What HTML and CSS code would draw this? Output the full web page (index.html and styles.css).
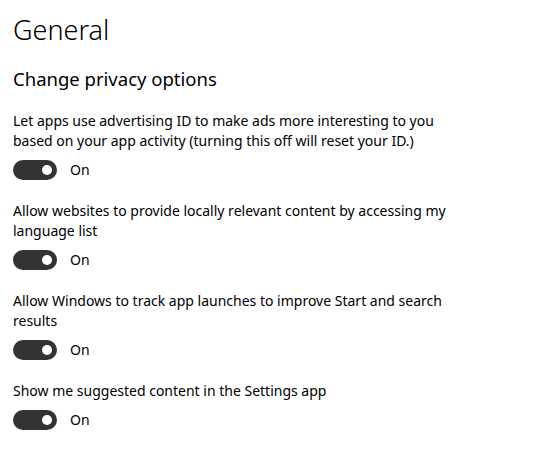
FILE: index.html
```html
<!DOCTYPE html>
<html lang="en">
<head>
    <meta charset="UTF-8">
    <meta name="viewport" content="width=device-width, initial-scale=1.0">
    <title>Privacy - General</title>
    <link rel="stylesheet" href="styles.css">
</head>
<body>
    <div class="page">
        <h1>General</h1>
        <h2>Change privacy options</h2>

        <div class="option">
            <p>Let apps use advertising ID to make ads more interesting to you based on your app activity (turning this off will reset your ID.)</p>
            <label class="switch"><span class="track"><span class="knob"></span></span>On</label>
        </div>

        <div class="option">
            <p>Allow websites to provide locally relevant content by accessing my language list</p>
            <label class="switch"><span class="track"><span class="knob"></span></span>On</label>
        </div>

        <div class="option">
            <p>Allow Windows to track app launches to improve Start and search results</p>
            <label class="switch"><span class="track"><span class="knob"></span></span>On</label>
        </div>

        <div class="option">
            <p>Show me suggested content in the Settings app</p>
            <label class="switch"><span class="track"><span class="knob"></span></span>On</label>
        </div>
    </div>
</body>
</html>
```

FILE: styles.css
```css
body {
    margin: 0;
    background: #fff;
    color: #000;
    font-family: 'Noto Sans', 'Open Sans', sans-serif;
}
.page {
    padding: 12px 13px;
    width: 440px;
}
h1 {
    margin: 0;
    font-size: 27px;
    font-weight: 300;
    line-height: 36px;
}
h2 {
    margin: 18px 0 0;
    font-size: 18.5px;
    font-weight: 400;
    line-height: 26px;
}
.option {
    margin-top: 19px;
}
.option + .option {
    margin-top: 21px;
}
.option p {
    margin: 0;
    font-size: 14px;
    line-height: 20px;
}
.switch {
    display: flex;
    align-items: center;
    gap: 13px;
    margin-top: 9px;
    font-size: 14px;
    line-height: 20px;
}
.track {
    display: flex;
    align-items: center;
    justify-content: flex-end;
    width: 44px;
    height: 20px;
    box-sizing: border-box;
    padding-right: 5px;
    border-radius: 10px;
    background: #333;
}
.knob {
    width: 10px;
    height: 10px;
    border-radius: 50%;
    background: #fff;
}
```
